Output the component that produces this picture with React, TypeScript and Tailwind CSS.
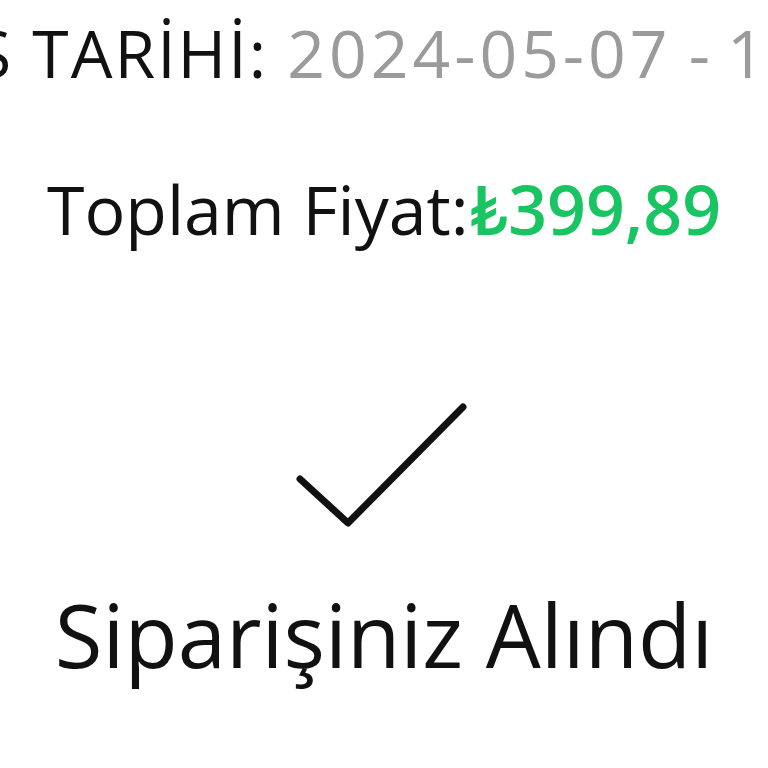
export default function App() {
  return (
    <div
      className="flex h-[768px] w-[768px] flex-col items-center overflow-hidden bg-white"
      style={{ fontFamily: "'Open Sans', Lato, sans-serif" }}
    >
      <div className="flex w-full justify-center overflow-hidden whitespace-nowrap pt-[12px] text-[66px] leading-[80px] tracking-[2px]">
        <span className="text-[#111]">SİPARİŞ TARİHİ:&nbsp;</span>
        <span className="tracking-[4px] text-[#9b9b9b]">2024-05-07</span>
        <span className="tracking-[0px] text-[#9b9b9b]">&nbsp;-&nbsp;</span>
        <span className="tracking-[1.5px] text-[#9b9b9b]">13:45:12</span>
      </div>

      <div className="mt-[77px] flex items-baseline whitespace-nowrap text-[68px] leading-[80px]">
        <span className="text-[#111]">Toplam Fiyat:</span>
        <span className="font-semibold text-[#19c463]">₺399,89</span>
      </div>

      <svg className="mt-[143px]" width="180" height="150" viewBox="0 0 180 150" fill="none">
        <polyline
          points="6,87 54,131 169,15"
          stroke="#111"
          strokeWidth="7"
          strokeLinecap="round"
          strokeLinejoin="round"
        />
      </svg>

      <div className="mt-[42px] whitespace-nowrap text-[87px] leading-[100px] text-[#111]">
        Siparişiniz Alındı
      </div>
    </div>
  );
}
